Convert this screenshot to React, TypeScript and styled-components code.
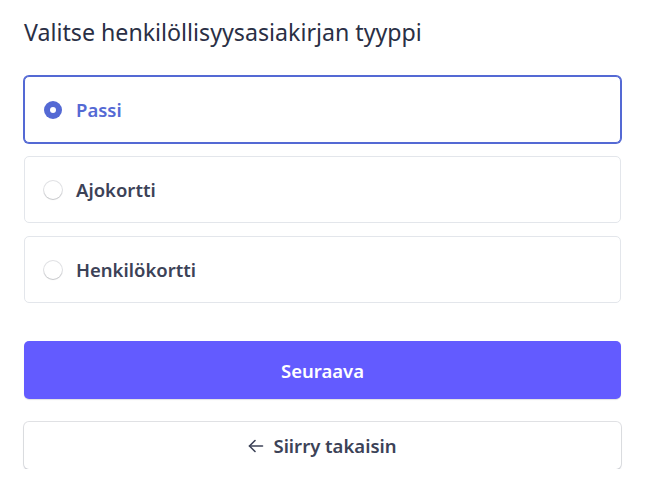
import React, { useState } from "react";
import styled, { createGlobalStyle } from "styled-components";

const Global = createGlobalStyle`
  html, body { margin: 0; padding: 0; background: #ffffff; }
  body { font-family: "Noto Sans", "Open Sans", sans-serif; -webkit-font-smoothing: antialiased; }
  * { box-sizing: border-box; }
`;

const Page = styled.div`
  padding: 16px 26px 0 24px;
  display: flex;
  flex-direction: column;
`;

const Title = styled.h1`
  margin: 0 0 28px 0;
  font-size: 23.2px;
  line-height: 32px;
  font-weight: 400;
  color: #2a2f45;
`;

const Options = styled.div`
  display: flex;
  flex-direction: column;
  gap: 13px;
`;

const Option = styled.label<{ $selected: boolean }>`
  height: 67px;
  display: flex;
  align-items: center;
  gap: 14px;
  padding: 0 19px;
  border-radius: 5px;
  background: #fff;
  border: 1px solid ${(p) => (p.$selected ? "#5469d4" : "#e3e6eb")};
  box-shadow: ${(p) => (p.$selected ? "0 0 0 1px #5469d4" : "none")};
  cursor: pointer;
`;

const Radio = styled.span<{ $selected: boolean }>`
  width: 18px;
  height: 18px;
  border-radius: 50%;
  flex: none;
  display: flex;
  align-items: center;
  justify-content: center;
  background: ${(p) => (p.$selected ? "#5469d4" : "#ffffff")};
  box-shadow: ${(p) =>
    p.$selected
      ? "none"
      : "0 0 0 1px rgba(60,66,87,0.16), 0 1px 1px rgba(0,0,0,0.12)"};
  &::after {
    content: "";
    width: 6px;
    height: 6px;
    border-radius: 50%;
    background: #fff;
    display: ${(p) => (p.$selected ? "block" : "none")};
  }
`;

const OptionLabel = styled.span<{ $selected: boolean }>`
  font-size: 18.5px;
  font-weight: 600;
  color: ${(p) => (p.$selected ? "#5469d4" : "#3c4257")};
`;

const Actions = styled.div`
  display: flex;
  flex-direction: column;
  gap: 23px;
  margin-top: 38px;
`;

const PrimaryButton = styled.button`
  height: 58px;
  border: none;
  border-radius: 5px;
  background: #635bff;
  color: #ffffff;
  font-family: inherit;
  font-size: 18.5px;
  font-weight: 600;
  box-shadow: 0 1px 1px rgba(0,0,0,0.12);
  cursor: pointer;
`;

const SecondaryButton = styled.button`
  height: 47px;
  border: none;
  border-radius: 5px;
  background: #ffffff;
  color: #3c4257;
  font-family: inherit;
  font-size: 18.5px;
  font-weight: 600;
  display: flex;
  align-items: center;
  justify-content: center;
  gap: 9px;
  box-shadow: 0 0 0 1px rgba(60,66,87,0.16), 0 2px 2px rgba(60,66,87,0.12);
  cursor: pointer;
`;

const ArrowIcon = () => (
  <svg width="16" height="16" viewBox="0 0 16 16" fill="none" stroke="#3c4257" strokeWidth="1.6" strokeLinecap="round" strokeLinejoin="round">
    <path d="M14.5 8H1.5" />
    <path d="M7 2.5L1.5 8L7 13.5" />
  </svg>
);

const items = ["Passi", "Ajokortti", "Henkilökortti"];

export default function App() {
  const [sel, setSel] = useState(0);
  return (
    <>
      <Global />
      <Page>
        <Title>Valitse henkilöllisyysasiakirjan tyyppi</Title>
        <Options>
          {items.map((t, i) => (
            <Option key={t} $selected={sel === i} onClick={() => setSel(i)}>
              <Radio $selected={sel === i} />
              <OptionLabel $selected={sel === i}>{t}</OptionLabel>
            </Option>
          ))}
        </Options>
        <Actions>
          <PrimaryButton>Seuraava</PrimaryButton>
          <SecondaryButton>
            <ArrowIcon />
            Siirry takaisin
          </SecondaryButton>
        </Actions>
      </Page>
    </>
  );
}
